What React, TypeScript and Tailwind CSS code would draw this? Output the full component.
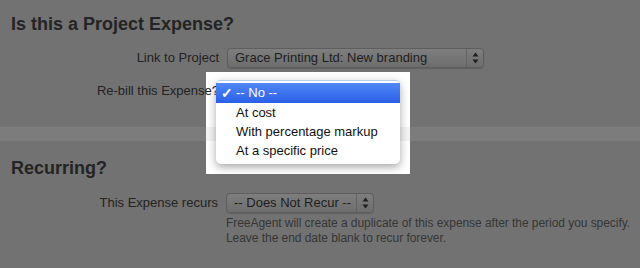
import React from 'react';

const OPTIONS = ['-- No --', 'At cost', 'With percentage markup', 'At a specific price'];

function Stepper() {
  return (
    <svg width="7" height="12" viewBox="0 0 7 12" className="block">
      <path d="M3.5 0.5 L6.5 4.5 H0.5 Z" fill="#1f1f1f" />
      <path d="M3.5 11.5 L6.5 7.5 H0.5 Z" fill="#1f1f1f" />
    </svg>
  );
}

function FakeSelect({ value, width }: { value: string; width: string }) {
  return (
    <div
      className={`${width} h-[20px] flex items-stretch rounded-[4px] border border-[#5e5e5e] bg-linear-to-b from-[#7e7e7e] to-[#6d6d6d] shadow-[0_1px_1px_rgba(0,0,0,0.15)]`}
    >
      <span className="flex-1 pl-[7px] text-[13px] leading-[18px] text-[#1e1e1e] whitespace-nowrap overflow-hidden">
        {value}
      </span>
      <span className="w-[17px] border-l border-[#626262] flex items-center justify-center">
        <Stepper />
      </span>
    </div>
  );
}

export default function App() {
  return (
    <div
      className="relative w-[640px] h-[268px] overflow-hidden bg-[#727272]"
      style={{ fontFamily: '"Liberation Sans", Arial, Helvetica, sans-serif' }}
    >
      {/* ── Project expense section ─────────────────────────── */}
      <section className="pt-[13px] pl-[11px]">
        <h2 className="text-[18px] leading-[22px] font-bold text-[#242424]">Is this a Project Expense?</h2>
      </section>

      <div className="grid grid-cols-[208px_1fr] gap-x-2 gap-y-[13px] pl-[11px] mt-[13px]">
        <label className="text-right text-[13px] leading-[20px] text-[#232323]">Link to Project</label>
        <FakeSelect value="Grace Printing Ltd: New branding" width="w-[257px]" />

        <label className="relative z-20 text-right text-[13px] leading-[20px] text-[#232323] whitespace-nowrap">
          Re-bill this Expense?
        </label>
        <FakeSelect value="-- No --" width="w-[174px]" />
      </div>

      <div className="mt-[26px] h-[14px] bg-[#7c7c7c]" />

      {/* ── Recurring section ───────────────────────────────── */}
      <section className="pt-[16px] pl-[11px]">
        <h2 className="text-[18px] leading-[22px] font-bold text-[#242424]">Recurring?</h2>
      </section>

      <div className="grid grid-cols-[207px_1fr] gap-x-2 pl-[11px] mt-[14px]">
        <label className="text-right text-[13px] leading-[20px] text-[#232323]">This Expense recurs</label>
        <div>
          <FakeSelect value="-- Does Not Recur --" width="w-[148px]" />
          <p className="mt-[3px] text-[12px] leading-[15px] tracking-[-0.05px] text-[#363636]">
            FreeAgent will create a duplicate of this expense after the period you specify.
            <br />
            Leave the end date blank to recur forever.
          </p>
        </div>
      </div>

      {/* ── Spotlight around the open menu ───────────────────── */}
      <div className="absolute left-[206px] top-[72px] w-[204px] h-[102px] bg-white z-10">
        <div className="absolute left-0 right-0 top-[55px] h-[14px] bg-[#f3f3f3]" />
      </div>

      {/* ── Open dropdown menu ──────────────────────────────── */}
      <ul className="absolute left-[216px] top-[80px] w-[184px] z-30 bg-white rounded-[5px] border-t border-[#b9cdf2] pt-[2px] pb-[4px] shadow-[0_3px_9px_rgba(0,0,0,0.35)]">
        {OPTIONS.map((opt, i) => (
          <li
            key={opt}
            className={
              i === 0
                ? 'relative h-[20px] pl-[20px] text-[13px] leading-[20px] text-white bg-linear-to-b from-[#5187f5] to-[#2b5fe8]'
                : 'relative h-[19px] pl-[20px] text-[13px] leading-[19px] text-[#111]'
            }
          >
            {i === 0 && <span className="absolute left-[5px] top-0 text-[14px] font-bold">✓</span>}
            {opt}
          </li>
        ))}
      </ul>
    </div>
  );
}
